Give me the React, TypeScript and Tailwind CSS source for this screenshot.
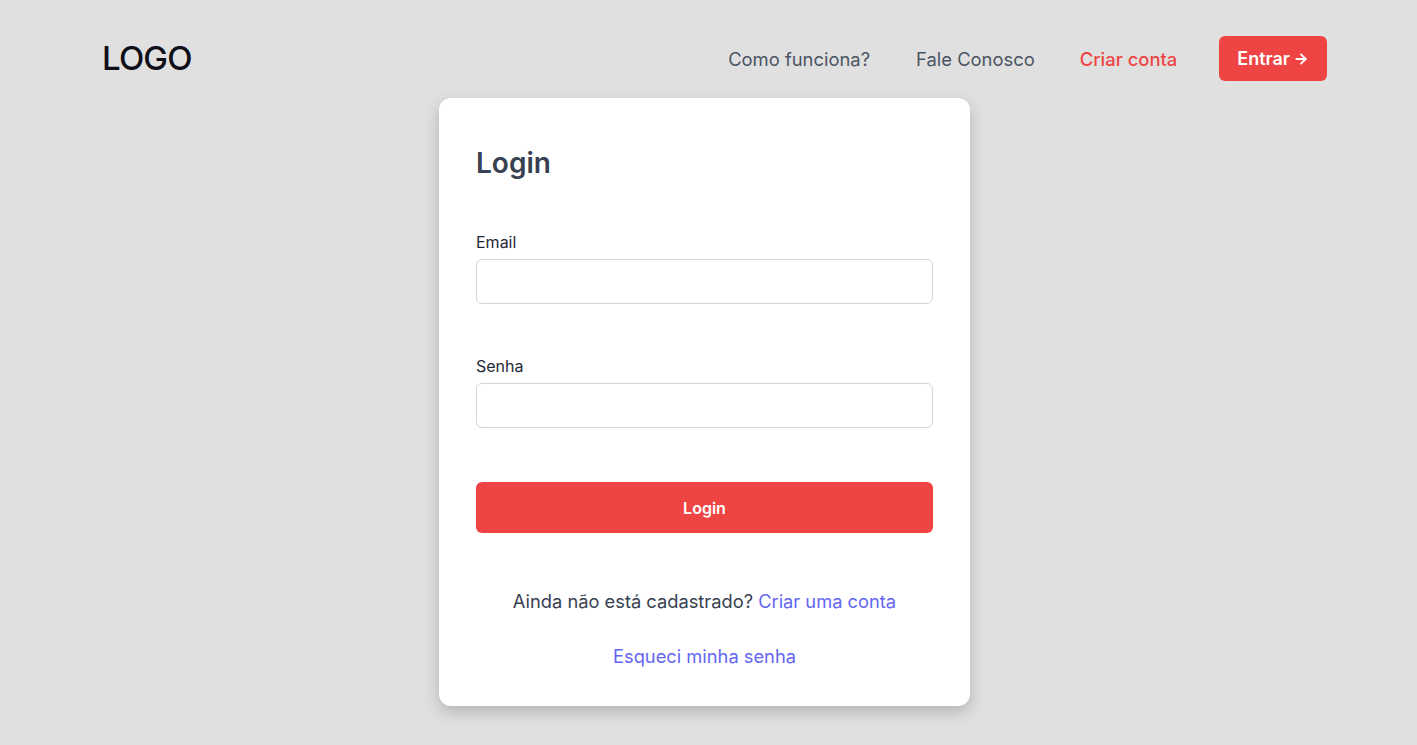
import { ArrowRight } from 'lucide-react';

const font = { fontFamily: 'Inter, "Noto Sans", sans-serif' };

function Header() {
  return (
    <header className="flex items-center justify-between pl-[102px] pr-[90px] pt-[33px]">
      <span className="text-[33px] leading-[51px] font-medium tracking-tight text-[#0f0f1a]">LOGO</span>
      <nav className="flex items-center text-[18.4px]">
        <a className="pt-[2px] text-[#4b5563]">Como funciona?</a>
        <a className="ml-[46px] pt-[2px] text-[#4b5563]">Fale Conosco</a>
        <a className="ml-[45px] pt-[2px] font-medium text-[#ef4444]">Criar conta</a>
        <button className="ml-[42px] flex h-[45px] items-center gap-[3px] rounded-md bg-[#ef4444] px-[18px] text-lg font-semibold text-white">
          Entrar
          <ArrowRight size={16} strokeWidth={2.75} />
        </button>
      </nav>
    </header>
  );
}

function Field({ label, type }: { label: string; type: string }) {
  return (
    <label className="flex flex-col">
      <span className="text-base text-[#1f2937]">{label}</span>
      <input
        type={type}
        className="mt-[5px] h-[45px] rounded-md border border-[#d1d5db] bg-white px-3 outline-none"
      />
    </label>
  );
}

export default function App() {
  return (
    <div style={font} className="min-h-screen bg-[#e0e0e0]">
      <Header />
      <main className="flex justify-center pb-10">
        <div className="mt-[14px] ml-[-8px] w-[531px] rounded-xl bg-white px-[37px] pt-[44px] pb-[36px] shadow-[0_6px_16px_rgba(0,0,0,0.2)]">
          <h1 className="text-[28px] font-semibold text-[#374151]">Login</h1>
          <div className="mt-[46px] flex flex-col gap-[50px]">
            <Field label="Email" type="email" />
            <Field label="Senha" type="password" />
          </div>
          <button className="mt-[54px] h-[51px] w-full rounded-md bg-[#ef4444] text-base font-semibold text-white">
            Login
          </button>
          <p className="mt-[54px] text-center text-[18.3px] leading-[28px] text-[#374151]">
            Ainda não está cadastrado? <a className="text-[#6366f1]">Criar uma conta</a>
          </p>
          <p className="mt-[27px] text-center text-[18.3px] leading-[28px]">
            <a className="text-[#6366f1]">Esqueci minha senha</a>
          </p>
        </div>
      </main>
    </div>
  );
}
